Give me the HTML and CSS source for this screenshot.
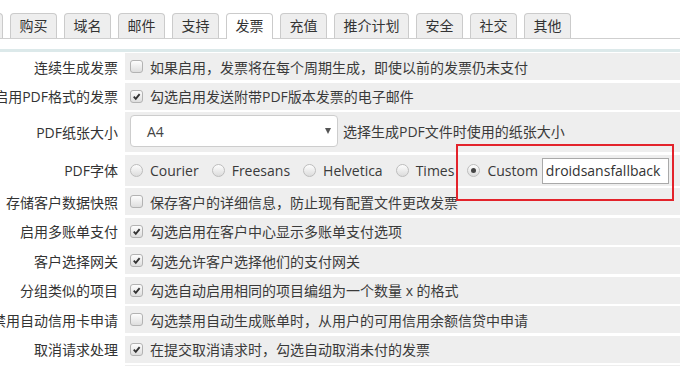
FILE: index.html
```html
<!DOCTYPE html>
<html lang="zh-CN">
<head>
    <meta charset="UTF-8">
    <title>发票设置</title>
    <link rel="stylesheet" href="styles.css">
</head>
<body>
    <div class="tabs">
        <span class="tab tab-cut">常规</span>
        <span class="tab">购买</span>
        <span class="tab">域名</span>
        <span class="tab">邮件</span>
        <span class="tab">支持</span>
        <span class="tab active">发票</span>
        <span class="tab">充值</span>
        <span class="tab">推介计划</span>
        <span class="tab">安全</span>
        <span class="tab">社交</span>
        <span class="tab">其他</span>
    </div>
    <div class="stripe"></div>

    <div class="form">
        <div class="row">
            <div class="label">连续生成发票</div>
            <div class="field"><span class="cb"></span>如果启用，发票将在每个周期生成，即使以前的发票仍未支付</div>
        </div>
        <div class="row">
            <div class="label">启用PDF格式的发票</div>
            <div class="field"><span class="cb on"><svg viewBox="0 0 12 12"><path d="M3 6.2 L5.2 8.6 L9.4 3.4"/></svg></span>勾选启用发送附带PDF版本发票的电子邮件</div>
        </div>
        <div class="row row-select">
            <div class="label">PDF纸张大小</div>
            <div class="field">
                <div class="select"><span>A4</span><span class="arrow"></span></div>
                <span class="hint">选择生成PDF文件时使用的纸张大小</span>
            </div>
        </div>
        <div class="row row-radio">
            <div class="label">PDF字体</div>
            <div class="field">
                <span class="opt"><span class="rd"></span>Courier</span>
                <span class="opt"><span class="rd"></span>Freesans</span>
                <span class="opt"><span class="rd"></span>Helvetica</span>
                <span class="opt"><span class="rd"></span>Times</span>
                <span class="opt"><span class="rd on"></span>Custom</span>
                <input class="text-input" type="text" value="droidsansfallback">
                <div class="highlight"></div>
            </div>
        </div>
        <div class="row">
            <div class="label">存储客户数据快照</div>
            <div class="field"><span class="cb"></span>保存客户的详细信息，防止现有配置文件更改发票</div>
        </div>
        <div class="row">
            <div class="label">启用多账单支付</div>
            <div class="field"><span class="cb on"><svg viewBox="0 0 12 12"><path d="M3 6.2 L5.2 8.6 L9.4 3.4"/></svg></span>勾选启用在客户中心显示多账单支付选项</div>
        </div>
        <div class="row">
            <div class="label">客户选择网关</div>
            <div class="field"><span class="cb on"><svg viewBox="0 0 12 12"><path d="M3 6.2 L5.2 8.6 L9.4 3.4"/></svg></span>勾选允许客户选择他们的支付网关</div>
        </div>
        <div class="row">
            <div class="label">分组类似的项目</div>
            <div class="field"><span class="cb on"><svg viewBox="0 0 12 12"><path d="M3 6.2 L5.2 8.6 L9.4 3.4"/></svg></span>勾选自动启用相同的项目编组为一个数量 x 的格式</div>
        </div>
        <div class="row">
            <div class="label">禁用自动信用卡申请</div>
            <div class="field"><span class="cb"></span>勾选禁用自动生成账单时，从用户的可用信用余额信贷中申请</div>
        </div>
        <div class="row">
            <div class="label">取消请求处理</div>
            <div class="field"><span class="cb on"><svg viewBox="0 0 12 12"><path d="M3 6.2 L5.2 8.6 L9.4 3.4"/></svg></span>在提交取消请求时，勾选自动取消未付的发票</div>
        </div>
        <div class="row">
            <div class="label">自动取消</div>
            <div class="field"></div>
        </div>
    </div>
</body>
</html>
```

FILE: styles.css
```css
* {
    margin: 0;
    padding: 0;
    box-sizing: border-box;
}

body {
    font-family: 'Open Sans', 'Noto Sans CJK SC', sans-serif;
    font-size: 14px;
    color: #333;
    background: #fff;
    overflow: hidden;
}

/* tab bar */
.tabs {
    display: flex;
    gap: 7px;
    padding-top: 13px;
    margin-left: -44px;
    border-bottom: 1px solid #cfcfcf;
    height: 39px;
}

.tab {
    height: 25px;
    line-height: 23px;
    padding: 0 8.5px;
    background: #eee;
    border: 1px solid #cbcbcb;
    border-bottom: none;
    border-radius: 4px 4px 0 0;
    white-space: nowrap;
    color: #333;
}

.tab.active {
    background: #fff;
    height: 26px;
}

.stripe {
    height: 3px;
    margin-top: 10px;
    margin-bottom: 1px;
    background: #dce9ea;
}

/* settings rows */
.row {
    display: flex;
    min-height: 27px;
    margin-bottom: 2.5px;
}

.label {
    width: 125px;
    flex-shrink: 0;
    display: flex;
    align-items: center;
    justify-content: flex-end;
    padding-right: 7px;
    white-space: nowrap;
}

.field {
    flex: 1;
    display: flex;
    align-items: center;
    background: #eee;
    padding-left: 5px;
    white-space: nowrap;
    color: #3a3a3a;
}

.cb {
    width: 13px;
    height: 13px;
    margin-right: 7px;
    border: 1px solid #b3b3b3;
    border-radius: 3px;
    background: linear-gradient(#fdfdfd, #dedede);
    display: inline-flex;
}

.cb svg {
    width: 11px;
    height: 11px;
    fill: none;
    stroke: #333;
    stroke-width: 2;
}

.row-select .field {
    padding-top: 3px;
    padding-bottom: 5px;
}

.select {
    width: 208px;
    height: 32px;
    background: #fff;
    border: 1px solid #cdcdcd;
    border-radius: 4px;
    display: flex;
    align-items: center;
    justify-content: space-between;
    padding: 0 6px 0 16px;
    margin-right: 5px;
    color: #444;
}

.arrow {
    width: 0;
    height: 0;
    border-left: 3.5px solid transparent;
    border-right: 3.5px solid transparent;
    border-top: 6px solid #555;
}

.row-radio .field {
    position: relative;
    padding-top: 3px;
    padding-bottom: 2px;
}

.opt {
    display: inline-flex;
    align-items: center;
    margin-right: 13px;
}

.opt:last-of-type {
    margin-right: 4px;
}

.rd {
    width: 13px;
    height: 13px;
    margin-right: 7px;
    border: 1px solid #bdbdbd;
    border-radius: 50%;
    background: linear-gradient(#fdfdfd, #dcdcdc);
    display: inline-flex;
    align-items: center;
    justify-content: center;
}

.rd.on::after {
    content: "";
    width: 5px;
    height: 5px;
    border-radius: 50%;
    background: #444;
}

.text-input {
    width: 127px;
    height: 26px;
    border: 1px solid #a9a9a9;
    padding: 0 3px;
    font-family: 'Open Sans', sans-serif;
    font-size: 14px;
    color: #333;
    background: #fff;
    outline: none;
}

.highlight {
    position: absolute;
    left: 331px;
    top: -11px;
    width: 218px;
    height: 57px;
    border: 2px solid #e3232b;
    pointer-events: none;
}
```
